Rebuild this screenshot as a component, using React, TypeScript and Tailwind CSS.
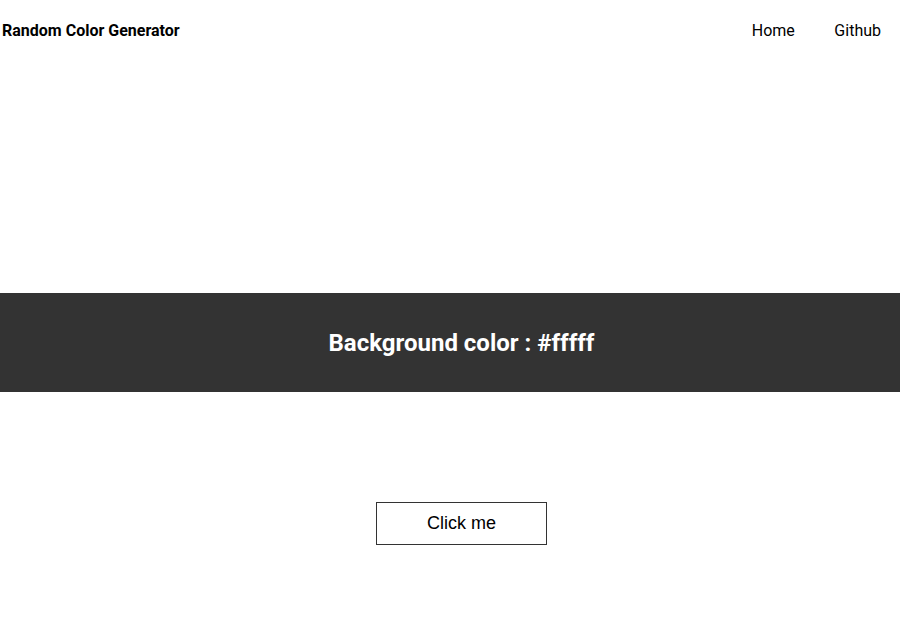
export default function App() {
    return (
        <div className="min-h-[618px] bg-white" style={{ fontFamily: "Roboto, sans-serif" }}>
            {/* Header */}
            <header className="h-[61px] flex items-center justify-between pl-[2px] pr-[19px] pt-[1px]">
                <h1 className="text-base font-bold text-black">Random Color Generator</h1>
                <nav className="flex gap-[39.5px] text-base text-black">
                    <a href="#">Home</a>
                    <a href="#">Github</a>
                </nav>
            </header>

            {/* Banner */}
            <div className="mt-[232px] h-[99px] bg-[#333333] flex items-center justify-center pl-[23px] pt-[1px]">
                <h2 className="text-2xl font-bold text-white">Background color : #fffff</h2>
            </div>

            {/* Button */}
            <div className="mt-[110px] flex justify-center pl-[23px]">
                <button
                    className="w-[171px] h-[43px] border border-[#333333] bg-white text-lg text-black pb-[2px]"
                    style={{ fontFamily: "'Liberation Sans', Arial, sans-serif" }}
                >
                    Click me
                </button>
            </div>
        </div>
    );
}
